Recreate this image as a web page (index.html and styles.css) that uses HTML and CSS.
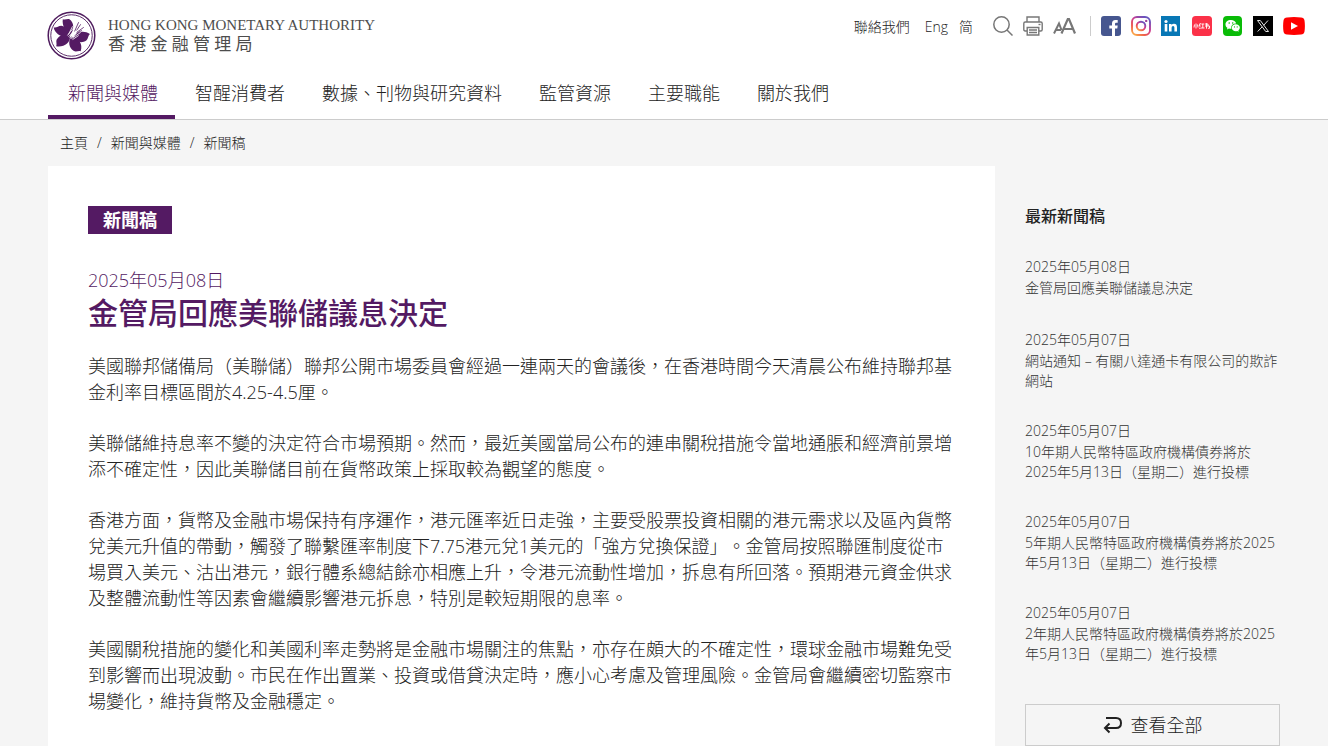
FILE: index.html
```html
<!DOCTYPE html>
<html lang="zh-HK">
<head>
<meta charset="utf-8">
<meta name="viewport" content="width=device-width, initial-scale=1">
<title>香港金融管理局 - 金管局回應美聯儲議息決定</title>
<link rel="stylesheet" href="styles.css">
</head>
<body>
<header class="site-header">
  <div class="top-row">
    <a class="brand" href="#">
      <svg class="brand-mark" viewBox="0 0 48 48" aria-hidden="true">
        <circle cx="24" cy="24" r="22.8" fill="#fff" stroke="#4f1c5e" stroke-width="1.5"/>
        <circle cx="24" cy="24" r="20.3" fill="none" stroke="#4f1c5e" stroke-width="0.9"/>
        <g fill="#541a63">
          <path d="M23 23C18 20 14.500 14 15.500 8C17.500 9 19.500 7.500 22 8C26.500 11 27 18 23 23Z"/>
          <path d="M23 24C17 27 8 24 6.500 16C9 17 11 14.500 14 14.500C19 15.500 22.500 19 23 24Z"/>
          <path d="M22.500 24.500C23.500 31 16 36 9 34.500C10 32.500 8.500 30 9.500 28C12 23.500 18 21.500 22.500 24.500Z"/>
          <path d="M23.500 25C31 26.500 35.500 32 33 39.500C31 38.500 28.500 40.500 26 39C21.500 36 20.500 30 23.500 25Z"/>
          <path d="M26 26C28 20.500 36 18.500 42 22.500C40 24.500 40.500 27 38.500 29C34 32 28 30.500 26 26Z"/>
        </g>
        <path d="M21 25L28 20M22 26L30 19M23 27L32 19M24 27L33 21M21 23L25 15M20 24L28 14M25 28L31 24" fill="none" stroke="#fff" stroke-width="0.8"/>
        <path d="M27 20L31 11M29 19L33 13M29 21L36 16M29 22L34 19" fill="none" stroke="#541a63" stroke-width="0.8"/>
      </svg>
      <span class="brand-text">
        <span class="brand-en">HONG KONG MONETARY AUTHORITY</span>
        <span class="brand-zh">香 港 金 融 管 理 局</span>
      </span>
    </a>
    <div class="tools">
      <div class="links">
        <a class="contact" href="#">聯絡我們</a>
        <a href="#">Eng</a>
        <a href="#">简</a>
      </div>
      <div class="actions">
        <button type="button" aria-label="搜尋">
          <svg width="20" height="20" viewBox="0 0 20 20" fill="none" stroke="#777" stroke-width="1.5"><circle cx="8.500" cy="8.500" r="7.700"/><path d="M14 14L19.500 19.500"/></svg>
        </button>
        <button type="button" aria-label="列印">
          <svg width="20" height="20" viewBox="0 0 20 20" fill="none" stroke="#777" stroke-width="1.400"><path d="M4 5.500V1H16V5.500M4 15H2.200Q.8 15 .8 13.500V7.500Q.8 6 2.200 6H17.800Q19.200 6 19.200 7.500V13.500Q19.200 15 17.800 15H16M4.200 11.500H15.800V19H4.200Z"/><path d="M6 14H14M6 16.500H14" stroke-width="1.600"/><path d="M15.500 8.500H17.500"/></svg>
        </button>
        <button type="button" aria-label="字體大小">
          <svg width="23" height="20" viewBox="0 0 23 20" fill="none" stroke="#777"><path d="M1 17.500L6 7.500L8.500 14M2.500 14H8" stroke-width="2"/><path d="M8.500 17.500L14.800 3H16L22 17.500M11 13H20" stroke-width="2.200"/></svg>
        </button>
      </div>
      <div class="social">
        <a href="#" aria-label="Facebook"><svg width="20" height="20" viewBox="0 0 20 20"><rect width="20" height="20" rx="3" fill="#46568f"/><path d="M11 20V12.500H8.300V9.500H11V7.500Q11 4 14.300 4H16.700V6.800H15Q14 6.800 14 8V9.500H16.700L16.300 12.500H14V20Z" fill="#fff"/></svg></a>
        <a href="#" aria-label="Instagram"><svg width="20" height="20" viewBox="0 0 20 20"><defs><linearGradient id="insta" x1="0" y1="1" x2=".7" y2="0"><stop offset="0" stop-color="#fdbb45"/><stop offset=".35" stop-color="#ed5a4f"/><stop offset=".65" stop-color="#cc3c91"/><stop offset="1" stop-color="#6855bd"/></linearGradient></defs><g fill="none" stroke="url(#insta)" stroke-width="1.900"><rect x="1" y="1" width="18" height="18" rx="5"/><circle cx="10" cy="10" r="4.300"/></g><circle cx="15.200" cy="4.900" r="1.200" fill="#9c449d"/></svg></a>
        <a href="#" aria-label="LinkedIn"><svg width="20" height="20" viewBox="0 0 20 20"><rect width="19" height="20" fill="#0877b5"/><circle cx="5" cy="5.500" r="1.600" fill="#fff"/><path d="M3.700 8H6.300V15.500H3.700ZM8 8H10.500V9Q11.400 7.800 13 7.800Q16 7.800 16 11.200V15.500H13.400V11.600Q13.400 10 12.100 10Q10.600 10 10.600 11.800V15.500H8Z" fill="#fff"/></svg></a>
        <a class="wide" href="#" aria-label="小紅書"><svg width="20" height="20" viewBox="0 0 20 20"><rect width="20" height="20" rx="3.500" fill="#fb3148"/><path d="M4 7.500V12.500M2.500 8.500L2 11.500M5.500 8.500L6 11.500M7 8.500L8.500 7.500M8.500 7.500L7 10H8.700M7 12.200H8.800M9.300 8H12.300M10.800 8V12M9 12H12.500M13 8H16V10M13 10H17.500V12.300H16M14.500 7.200V12.700" fill="none" stroke="#fff" stroke-width=".9"/></svg></a>
        <a class="wide" href="#" aria-label="WeChat"><svg width="20" height="20" viewBox="0 0 20 20"><rect width="19" height="20" rx="4" fill="#09bb07"/><path d="M8 4C4.500 4 2.500 6 2.500 8.400C2.500 9.800 3.200 11 4.400 11.800L4 13.500L6 12.600Q7 12.900 8.500 12.800C7.500 9.500 10 7.300 13.200 7.400C12.600 5.300 10.600 4 8 4Z" fill="#fff"/><path d="M12.800 8.200C10.300 8.200 8.800 9.900 8.800 11.800C8.800 14.300 11.500 15.700 14.200 15L15.700 15.800L15.400 14.300C18.300 12.200 16.700 8.200 12.800 8.200Z" fill="#fff"/><g fill="#09bb07"><circle cx="6.200" cy="7" r=".8"/><circle cx="9.700" cy="7" r=".8"/><circle cx="11.500" cy="10.900" r=".6"/><circle cx="14.200" cy="10.900" r=".6"/></g></svg></a>
        <a href="#" aria-label="X"><svg width="20" height="20" viewBox="0 0 20 20"><rect width="20" height="20" fill="#000"/><path d="M4.500 4.500H7.300L15.500 15.500H12.700ZM15 4.500L10.700 9.300M9.200 10.800L4.700 15.500" fill="none" stroke="#fff" stroke-width=".9"/></svg></a>
        <a href="#" aria-label="YouTube"><svg width="22" height="18" viewBox="0 0 22 18"><path d="M4 .5Q11 -.3 18 .5Q21 .7 21.500 3.500Q22.300 9 21.500 14.500Q21 17.300 18 17.500Q11 18.300 4 17.500Q1 17.300 .5 14.500Q-.3 9 .5 3.500Q1 .7 4 .5Z" fill="#f00"/><path d="M8 5.200L15 9L8 12.800Z" fill="#fff"/></svg></a>
      </div>
    </div>
  </div>
  <nav class="main-nav" aria-label="主選單">
    <a class="active" href="#">新聞與媒體</a>
    <a href="#">智醒消費者</a>
    <a href="#">數據、刊物與研究資料</a>
    <a href="#">監管資源</a>
    <a href="#">主要職能</a>
    <a href="#">關於我們</a>
  </nav>
</header>
<nav class="breadcrumb" aria-label="路徑">
  <a href="#">主頁</a><span>/</span><a href="#">新聞與媒體</a><span>/</span><a href="#">新聞稿</a>
</nav>
<div class="layout">
  <main class="article">
    <span class="tag">新聞稿</span>
    <time class="date" datetime="2025-05-08">2025年05月08日</time>
    <h1>金管局回應美聯儲議息決定</h1>
    <p>美國聯邦儲備局（美聯儲）聯邦公開市場委員會經過一連兩天的會議後，在香港時間今天清晨公布維持聯邦基金利率目標區間於4.25-4.5厘。</p>
    <p>美聯儲維持息率不變的決定符合市場預期。然而，最近美國當局公布的連串關稅措施令當地通脹和經濟前景增添不確定性，因此美聯儲目前在貨幣政策上採取較為觀望的態度。</p>
    <p>香港方面，貨幣及金融市場保持有序運作，港元匯率近日走強，主要受股票投資相關的港元需求以及區內貨幣兌美元升值的帶動，觸發了聯繫匯率制度下7.75港元兌1美元的「強方兌換保證」。金管局按照聯匯制度從市場買入美元、沽出港元，銀行體系總結餘亦相應上升，令港元流動性增加，拆息有所回落。預期港元資金供求及整體流動性等因素會繼續影響港元拆息，特別是較短期限的息率。</p>
    <p>美國關稅措施的變化和美國利率走勢將是金融市場關注的焦點，亦存在頗大的不確定性，環球金融市場難免受到影響而出現波動。市民在作出置業、投資或借貸決定時，應小心考慮及管理風險。金管局會繼續密切監察市場變化，維持貨幣及金融穩定。</p>
  </main>
  <aside class="sidebar">
    <h2>最新新聞稿</h2>
    <ul class="news">
      <li><time datetime="2025-05-08">2025年05月08日</time><a href="#">金管局回應美聯儲議息決定</a></li>
      <li><time datetime="2025-05-07">2025年05月07日</time><a href="#">網站通知 – 有關八達通卡有限公司的欺詐網站</a></li>
      <li><time datetime="2025-05-07">2025年05月07日</time><a href="#">10年期人民幣特區政府機構債券將於2025年5月13日（星期二）進行投標</a></li>
      <li><time datetime="2025-05-07">2025年05月07日</time><a href="#">5年期人民幣特區政府機構債券將於2025年5月13日（星期二）進行投標</a></li>
      <li><time datetime="2025-05-07">2025年05月07日</time><a href="#">2年期人民幣特區政府機構債券將於2025年5月13日（星期二）進行投標</a></li>
    </ul>
    <a class="view-all" href="#">
      <svg width="20" height="20" viewBox="0 0 20 20" fill="none" stroke="#222" stroke-width="2"><path d="M3 3H13Q18 3 18 8Q18 13 13 13H2M6.500 8.500L2 13L6.500 17.500"/></svg>
      查看全部
    </a>
  </aside>
</div>
</body>
</html>
```
FILE: styles.css
```css
* {
  box-sizing: border-box;
}

body {
  margin: 0;
  background: #f5f5f5;
  color: #222;
  font-family: "Open Sans", "Noto Sans CJK TC", sans-serif;
  font-weight: 300;
  font-size: 18px;
  line-height: 26px;
  text-spacing-trim: space-all;
}

a {
  color: inherit;
  text-decoration: none;
}

.site-header {
  background: #fff;
  border-bottom: 1px solid #ccc;
}

.top-row {
  display: flex;
  justify-content: space-between;
  align-items: flex-start;
  padding: 11px 23px 0 47px;
}

.brand {
  display: flex;
  align-items: center;
  gap: 12px;
  color: #4d4d4d;
}

.brand-mark {
  width: 49px;
  height: 49px;
}

.brand-text {
  display: flex;
  flex-direction: column;
}

.brand-en {
  font-family: "Liberation Serif", serif;
  font-size: 15px;
  font-weight: 400;
  line-height: 18px;
}

.brand-zh {
  font-family: "Liberation Serif", "Noto Sans CJK TC", serif;
  font-size: 17px;
  font-weight: 400;
  line-height: 22px;
}

.tools {
  display: flex;
  align-items: center;
  height: 30px;
}

.links {
  display: flex;
  gap: 11px;
  margin-right: 20px;
  padding-top: 2px;
  font-size: 14px;
  line-height: 20px;
}

.contact {
  margin-right: 4px;
}

.actions {
  display: flex;
  gap: 10px;
}

.actions button {
  padding: 0;
  border: 0;
  background: none;
}

.actions svg,
.social svg {
  display: block;
}

.social {
  display: flex;
  align-items: center;
  gap: 10px;
  height: 20px;
  margin-left: 14px;
  padding-left: 10px;
  border-left: 1px solid #ccc;
}

.social .wide {
  padding-left: 1px;
}

.main-nav {
  display: flex;
  margin: 11px 48px 0;
}

.main-nav a {
  padding: 9px 17px 9px 20px;
  border-bottom: 4px solid transparent;
}

.main-nav .active {
  color: #541a63;
  border-color: #541a63;
}

.breadcrumb {
  display: flex;
  gap: 9px;
  padding: 13px 60px;
  font-size: 14px;
  line-height: 20px;
}

.layout {
  display: grid;
  grid-template-columns: minmax(0, 1fr) 285px;
  padding: 0 48px;
}

.article {
  padding: 40px;
  background: #fff;
}

.tag {
  display: inline-block;
  padding: 1px 15px;
  background: #541a63;
  color: #fff;
  font-weight: 700;
  vertical-align: top;
}

.date {
  display: block;
  margin-top: 33px;
  color: #541a63;
}

h1 {
  margin: 0 0 20px;
  color: #541a63;
  font-size: 30px;
  font-weight: 500;
  line-height: 40px;
}

.article p {
  margin: 0 0 25px;
}

.sidebar {
  padding: 40px 0 0 30px;
  color: #333;
  font-size: 14px;
  line-height: 20px;
}

.sidebar h2 {
  margin: 0 0 30px;
  color: #222;
  font-size: 16px;
  font-weight: 500;
  line-height: 20px;
}

.news {
  display: grid;
  gap: 29px;
  margin: 0 0 40px;
  padding: 0;
  list-style: none;
}

.news li {
  min-height: 44px;
}

.news time {
  display: block;
  line-height: 22px;
}

.news a {
  display: block;
}

.view-all {
  display: flex;
  justify-content: center;
  align-items: center;
  gap: 8px;
  height: 42px;
  border: 1px solid #ccc;
  color: #222;
  font-size: 18px;
}
```
